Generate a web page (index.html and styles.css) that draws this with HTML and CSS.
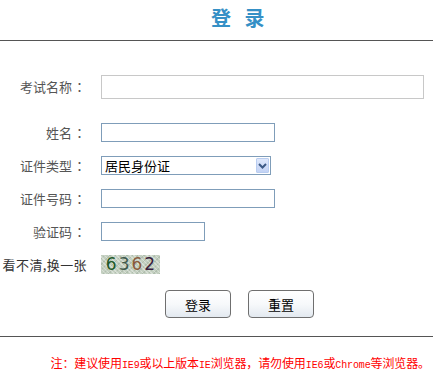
FILE: index.html
```html
<!DOCTYPE html>
<html lang="zh-CN">
<head>
<meta charset="utf-8">
<title>登录</title>
<link rel="stylesheet" href="styles.css">
</head>
<body>
<div class="header"><h1 class="title">登&nbsp;&nbsp;&nbsp;录</h1></div>
<form class="form">
  <div class="row row-first">
    <label class="label">考试名称<span class="colon">：</span></label>
    <input class="input input-wide" type="text">
  </div>
  <div class="row">
    <label class="label">姓名<span class="colon">：</span></label>
    <input class="input input-mid" type="text">
  </div>
  <div class="row">
    <label class="label">证件类型<span class="colon">：</span></label>
    <span class="select-wrap">
      <select class="select"><option>居民身份证</option></select>
      <span class="select-btn"><svg width="9" height="6" viewBox="0 0 9 6"><path d="M1 1 L4.5 4.5 L8 1" fill="none" stroke="#3d5a86" stroke-width="2"/></svg></span>
    </span>
  </div>
  <div class="row">
    <label class="label">证件号码<span class="colon">：</span></label>
    <input class="input input-mid" type="text">
  </div>
  <div class="row">
    <label class="label">验证码<span class="colon">：</span></label>
    <input class="input input-short" type="text">
  </div>
  <div class="row">
    <span class="label label-dark">看不清,换一张</span>
    <span class="captcha"><span class="d1">6</span><span class="d2">3</span><span class="d3">6</span><span class="d4">2</span></span>
  </div>
  <div class="buttons">
    <button type="button" class="btn">登录</button>
    <button type="button" class="btn">重置</button>
  </div>
</form>
<div class="note">注：建议使用<span class="lat">IE9</span>或以上版本<span class="lat">IE</span>浏览器，请勿使用<span class="lat">IE6</span>或<span class="lat">Chrome</span>等浏览器。</div>
</body>
</html>
```

FILE: styles.css
```css
html, body {
  margin: 0;
  padding: 0;
  background: #fff;
}
body {
  font-family: "Noto Sans CJK SC", "Noto Sans", sans-serif;
  font-size: 13px;
  color: #555;
  width: 433px;
}
.header {
  height: 41px;
  border-bottom: 1px solid #555;
  display: flex;
  align-items: center;
  padding-left: 211px;
  box-sizing: border-box;
}
.title {
  margin: 0;
  font-size: 20px;
  font-weight: bold;
  color: #3590c6;
  line-height: 24px;
  margin-top: -4px;
}
.form {
  padding-top: 29px;
  margin: 0;
}
.row {
  display: flex;
  align-items: center;
  height: 33px;
}
.row-first {
  margin-bottom: 13px;
}
.label {
  width: 87px;
  flex: none;
  display: flex;
  justify-content: flex-end;
  align-items: center;
  white-space: nowrap;
  color: #555;
  line-height: 16px;
}
.colon {
  width: 15px;
  text-align: center;
  font-family: "Noto Sans CJK TC", sans-serif;
}
.label-dark {
  color: #333;
  letter-spacing: 0.4px;
}
.input {
  margin: 0 0 0 14px;
  padding: 0 2px;
  border: 1px solid #7f9db9;
  height: 19px;
  box-sizing: border-box;
  font: inherit;
  outline: none;
  background: #fff;
}
.input-wide {
  width: 323px;
  height: 24px;
  border-color: #c8c8c8;
}
.input-mid {
  width: 174px;
}
.input-short {
  width: 104px;
}
.select-wrap {
  position: relative;
  margin-left: 14px;
  display: flex;
}
.select {
  -webkit-appearance: none;
  appearance: none;
  width: 170px;
  height: 19px;
  box-sizing: border-box;
  border: 1px solid #7f9db9;
  border-radius: 0;
  background: #fff;
  padding: 0 0 0 3px;
  margin: 0;
  font-family: "Noto Sans CJK SC", sans-serif;
  font-size: 13px;
  color: #000;
  line-height: 17px;
  outline: none;
}
.select-btn {
  position: absolute;
  right: 2px;
  top: 2px;
  width: 13px;
  height: 15px;
  box-sizing: border-box;
  border: 1px solid #b9cdf0;
  border-radius: 1px;
  background: linear-gradient(#dfe8fb, #c3d3f5);
  display: flex;
  align-items: center;
  justify-content: center;
}
.captcha {
  margin-left: 14px;
  width: 59px;
  height: 19px;
  background: #c3cfc0;
  background-image: repeating-linear-gradient(45deg, rgba(255,255,255,0.35) 0 1px, transparent 1px 3px), repeating-linear-gradient(-45deg, rgba(120,140,120,0.25) 0 1px, transparent 1px 4px);
  display: flex;
  align-items: center;
  justify-content: center;
  font-family: "DejaVu Sans", sans-serif;
  font-weight: normal;
  font-size: 17px;
  line-height: 19px;
  gap: 2px;
}
.d1 { color: #1f5a2a; }
.d2 { color: #3f5a4d; }
.d3 { color: #8a5a3c; }
.d4 { color: #3a1f3d; }
.buttons {
  display: flex;
  gap: 17px;
  padding: 9px 0 0 165px;
  height: 28px;
  margin-bottom: 18px;
}
.btn {
  width: 66px;
  height: 28px;
  margin: 0;
  padding: 0;
  border: 1px solid #6f6f6f;
  border-radius: 4px;
  background: linear-gradient(#ffffff 0%, #f7f9fb 50%, #e3e9f0 100%);
  font-family: "Noto Sans CJK SC", sans-serif;
  font-size: 13px;
  color: #000;
  cursor: pointer;
}
.note {
  border-top: 1px solid #555;
  padding: 18px 3px 0 0;
  text-align: right;
  color: #f00;
  font-size: 12px;
  line-height: 16px;
  letter-spacing: -0.12px;
}
.lat {
  font-family: "Liberation Mono", monospace;
  font-size: 10px;
}
```
